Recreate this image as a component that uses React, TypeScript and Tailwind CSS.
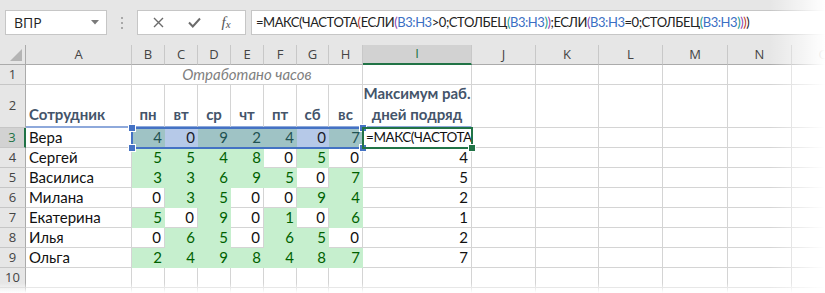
import React from "react";

const W = [
  "w-[26px]",
  "w-[106px]",
  "w-[33px]",
  "w-[33px]",
  "w-[33px]",
  "w-[33px]",
  "w-[33px]",
  "w-[32px]",
  "w-[34px]",
  "w-[109px]",
  "w-[64px]",
  "w-[63px]",
  "w-[64px]",
  "w-[65px]",
  "w-[64px]",
  "w-[64px]",
];

const letters = ["A", "B", "C", "D", "E", "F", "G", "H", "I", "J", "K", "L", "M", "N", "O"];

const people: [string, number[], number][] = [
  ["Вера", [4, 0, 9, 2, 4, 0, 7], 0],
  ["Сергей", [5, 5, 4, 8, 0, 5, 0], 4],
  ["Василиса", [3, 3, 6, 9, 5, 0, 7], 5],
  ["Милана", [0, 3, 5, 0, 0, 9, 4], 2],
  ["Екатерина", [5, 0, 9, 0, 1, 0, 6], 1],
  ["Илья", [0, 6, 5, 0, 6, 5, 0], 2],
  ["Ольга", [2, 4, 9, 8, 4, 8, 7], 7],
];

const days = ["пн", "вт", "ср", "чт", "пт", "сб", "вс"];

const cellFont = { fontFamily: "Lato, 'Liberation Sans', sans-serif" };
const uiFont = { fontFamily: "'Open Sans', 'Noto Sans', sans-serif" };

function RowHead({ n, active }: { n?: number; active?: boolean }) {
  return (
    <div
      className={
        "w-[26px] shrink-0 flex items-center justify-center text-[13px] border-b border-[#c6c6c6] " +
        (active
          ? "bg-[#d2d2d2] text-[#217346] border-r-2 border-r-[#217346]"
          : "bg-[#e6e6e6] text-[#444] border-r border-r-[#ababab]")
      }
      style={uiFont}
    >
      {n}
    </div>
  );
}

function Blank({ i }: { i: number }) {
  return <div className={W[i] + " shrink-0 border-r border-b border-[#d4d4d4]"} />;
}

function Formula() {
  const K = "text-[#222]";
  const R = "text-[#c0392b]";
  const P = "text-[#8e44ad]";
  const T = "text-[#1a9a8a]";
  const B = "text-[#3b6fc4]";
  const parts: [string, string][] = [
    ["=МАКС(ЧАСТОТА", K],
    ["(", R],
    ["ЕСЛИ", K],
    ["(", P],
    ["B3:H3", B],
    [">0;СТОЛБЕЦ", K],
    ["(", T],
    ["B3:H3", B],
    [")", T],
    [")", P],
    [";ЕСЛИ", K],
    ["(", P],
    ["B3:H3", B],
    ["=0;СТОЛБЕЦ", K],
    ["(", T],
    ["B3:H3", B],
    [")", T],
    [")", P],
    [")", R],
    [")", K],
  ];
  return (
    <span className="whitespace-nowrap">
      {parts.map(([t, c], i) => (
        <span key={i} className={c}>
          {t}
        </span>
      ))}
    </span>
  );
}

export default function App() {
  return (
    <div className="relative w-[825px] h-[293px] overflow-hidden bg-white">
      {/* formula bar */}
      <div className="h-[45px] bg-[#e6e6e6] flex items-center" style={uiFont}>
        <div className="ml-[5px] w-[102px] h-[25px] bg-white border border-[#c6c6c6] flex items-center justify-between pl-[8px] pr-[7px] text-[14px] text-[#222]">
          <span>ВПР</span>
          <svg width="8" height="5" viewBox="0 0 8 5">
            <path d="M0 0 L8 0 L4 4.5 Z" fill="#7a7a7a" />
          </svg>
        </div>
        <div className="w-[30px] flex flex-col items-center gap-[3px]">
          <div className="w-[2px] h-[2px] bg-[#a8a8a8]" />
          <div className="w-[2px] h-[2px] bg-[#a8a8a8]" />
          <div className="w-[2px] h-[2px] bg-[#a8a8a8]" />
        </div>
        <div className="w-[109px] h-[25px] bg-white border border-[#c6c6c6] flex items-center">
          <div className="w-[40px] flex justify-center">
            <svg width="11" height="11" viewBox="0 0 11 11">
              <path d="M1 1 L10 10 M10 1 L1 10" stroke="#6b6b6b" strokeWidth="1.4" />
            </svg>
          </div>
          <div className="w-[32px] flex justify-center">
            <svg width="13" height="11" viewBox="0 0 13 11">
              <path d="M1 5.5 L4.8 9.5 L12 1.5" stroke="#6b6b6b" strokeWidth="2" fill="none" />
            </svg>
          </div>
          <div
            className="w-[32px] flex justify-center italic text-[#555] text-[15px] leading-none"
            style={{ fontFamily: "'Liberation Serif', serif" }}
          >
            f<span className="text-[11px] mt-[4px]">x</span>
          </div>
        </div>
        <div
          className="ml-[5px] flex-1 h-[25px] bg-white border border-r-0 border-[#c6c6c6] flex items-center pl-[4px] text-[13px] tracking-[-0.45px]"
          style={cellFont}
        >
          <Formula />
        </div>
      </div>

      {/* column headers */}
      <div className="flex h-[20px] bg-[#e6e6e6] text-[13px] text-[#444]" style={uiFont}>
        <div className="w-[26px] shrink-0 border-r border-b border-[#ababab] relative">
          <svg className="absolute right-[3px] bottom-[3px]" width="12" height="12" viewBox="0 0 12 12">
            <path d="M12 0 L12 12 L0 12 Z" fill="#b4b4b4" />
          </svg>
        </div>
        {letters.map((l, i) => (
          <div
            key={l}
            className={
              W[i + 1] +
              " shrink-0 flex items-center justify-center border-r border-[#c8c8c8] " +
              (l === "I" ? "bg-[#d2d2d2] text-[#217346] border-b-2 border-b-[#217346]" : "border-b border-b-[#ababab]")
            }
          >
            {l}
          </div>
        ))}
      </div>

      <div style={cellFont} className="text-[15px] text-[#111]">
        {/* row 1 */}
        <div className="flex h-[20px]">
          <RowHead n={1} />
          <Blank i={1} />
          <div className="w-[231px] shrink-0 border-r border-b border-[#d4d4d4] flex items-center justify-center italic text-[#7f7f7f]">
            Отработано часов
          </div>
          {[9, 10, 11, 12, 13, 14, 15].map((i) => (
            <Blank key={i} i={i} />
          ))}
        </div>

        {/* row 2 */}
        <div className="flex h-[43px]">
          <RowHead n={2} />
          <div className="w-[106px] shrink-0 border-r border-[#d4d4d4] border-b-2 border-b-[#8ea9db] flex items-end pl-[3px] pb-[1px] font-bold text-[#44546a]">
            Сотрудник
          </div>
          {days.map((d, i) => (
            <div
              key={d}
              className={
                W[i + 2] +
                " shrink-0 border-r border-[#d4d4d4] border-b-2 border-b-[#8ea9db] flex items-end justify-center pb-[1px] font-bold text-[#44546a]"
              }
            >
              {d}
            </div>
          ))}
          <div className="w-[109px] shrink-0 border-r border-[#d4d4d4] border-b-2 border-b-[#8ea9db] flex flex-col items-center justify-end pb-[1px] font-bold text-[#44546a] leading-[21px]">
            <span>Максимум раб.</span>
            <span>дней подряд</span>
          </div>
          {[10, 11, 12, 13, 14, 15].map((i) => (
            <Blank key={i} i={i} />
          ))}
        </div>

        {/* data rows */}
        {people.map(([name, vals, max], r) => {
          const sel = r === 0;
          return (
            <div key={name} className="flex h-[20px]">
              <RowHead n={r + 3} active={sel} />
              <div className="w-[106px] shrink-0 border-r border-b border-[#d4d4d4] flex items-center pl-[3px]">
                {name}
              </div>
              {vals.map((v, i) => {
                let cls = "bg-white text-[#111]";
                if (v > 0) cls = "bg-[#c6efce] text-[#006100]";
                if (sel) cls = v > 0 ? "bg-[#9fc3c5] text-[#1f5252]" : "bg-[#b6c9e8] text-[#1b1b2a]";
                return (
                  <div
                    key={i}
                    className={
                      W[i + 2] +
                      " shrink-0 border-b flex items-center justify-end pr-[3px] " +
                      (v > 0 || sel ? "border-transparent " : "border-r border-[#d4d4d4] ") +
                      cls
                    }
                  >
                    {v}
                  </div>
                );
              })}
              {sel ? (
                <div className="w-[109px] shrink-0 border-r border-b border-[#d4d4d4] flex items-center pl-[3px] overflow-hidden whitespace-nowrap text-[13.5px] tracking-[-0.45px]">
                  =МАКС(ЧАСТОТА
                </div>
              ) : (
                <div className="w-[109px] shrink-0 border-r border-b border-[#d4d4d4] flex items-center justify-end pr-[3px]">
                  {max}
                </div>
              )}
              {[10, 11, 12, 13, 14, 15].map((i) => (
                <Blank key={i} i={i} />
              ))}
            </div>
          );
        })}

        {/* row 10 and the edge of row 11 */}
        {[10, 11].map((n) => (
          <div key={n} className="flex h-[20px]">
            <RowHead n={n === 10 ? n : undefined} />
            {W.slice(1).map((_, i) => (
              <Blank key={i} i={i + 1} />
            ))}
          </div>
        ))}
      </div>

      {/* reference range B3:H3 */}
      <div className="absolute left-[131px] top-[127px] w-[233px] h-[22px] border-2 border-[#4472c4]">
        <div className="absolute -left-[4px] -top-[4px] w-[6px] h-[6px] bg-[#4472c4] outline outline-white" />
        <div className="absolute -right-[4px] -top-[4px] w-[6px] h-[6px] bg-[#4472c4] outline outline-white" />
        <div className="absolute -left-[4px] -bottom-[4px] w-[6px] h-[6px] bg-[#4472c4] outline outline-white" />
        <div className="absolute -right-[4px] -bottom-[4px] w-[6px] h-[6px] bg-[#4472c4] outline outline-white" />
      </div>
      {/* active cell I3 */}
      <div className="absolute left-[362px] top-[127px] w-[111px] h-[22px] border-2 border-[#217346]">
        <div className="absolute -right-[4px] -bottom-[4px] w-[6px] h-[6px] bg-[#217346] outline outline-white" />
      </div>

      {/* edge fades */}
      <div className="absolute right-0 top-0 h-full w-[55px] bg-linear-to-r from-white/0 to-white" />
      <div className="absolute left-0 bottom-0 w-full h-[10px] bg-linear-to-b from-white/0 to-white" />
    </div>
  );
}
